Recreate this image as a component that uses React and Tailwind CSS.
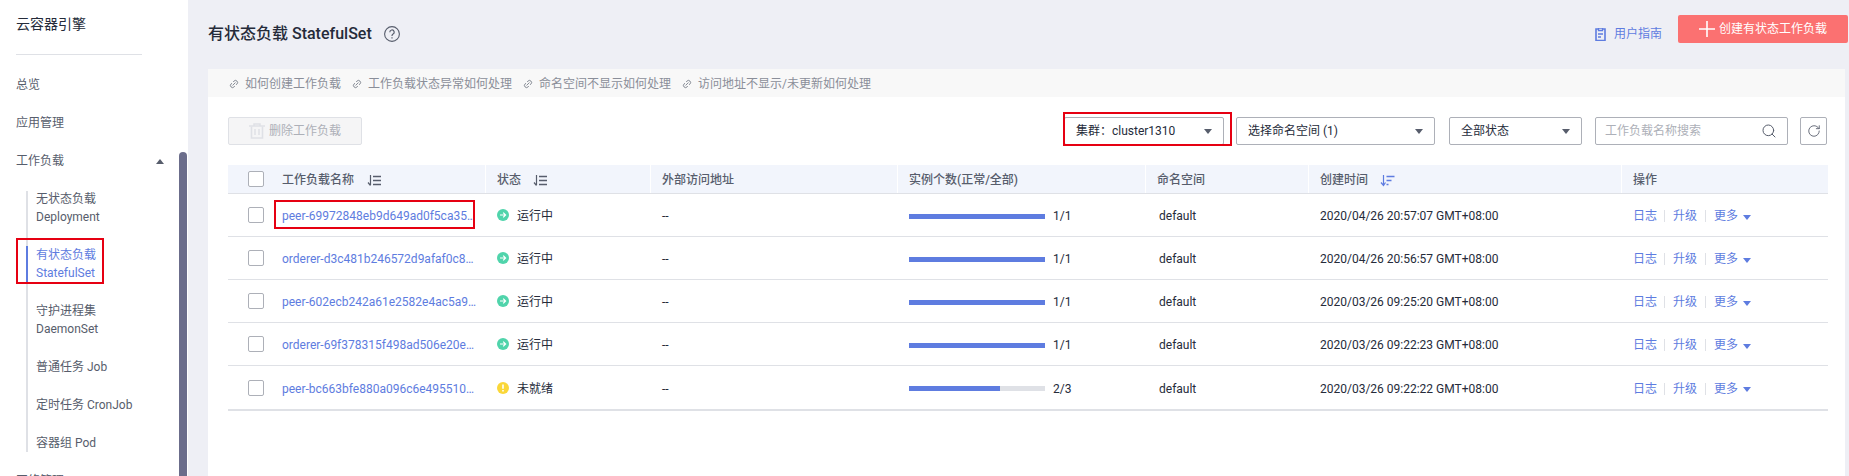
import React from 'react';
import { Search, RotateCw, Link2 } from 'lucide-react';

const rows = [
  { name: 'peer-69972848eb9d649ad0f5ca35b7c1e2a4', ok: true, pct: 100, count: '1/1', time: '2020/04/26 20:57:07 GMT+08:00', boxed: true },
  { name: 'orderer-d3c481b246572d9afaf0c8e17a2b94', ok: true, pct: 100, count: '1/1', time: '2020/04/26 20:56:57 GMT+08:00' },
  { name: 'peer-602ecb242a61e2582e4ac5a9d17f03c6', ok: true, pct: 100, count: '1/1', time: '2020/03/26 09:25:20 GMT+08:00' },
  { name: 'orderer-69f378315f498ad506e20e7c41b2a9', ok: true, pct: 100, count: '1/1', time: '2020/03/26 09:22:23 GMT+08:00' },
  { name: 'peer-bc663bfe880a096c6e495510d7e2f84a', ok: false, pct: 67, count: '2/3', time: '2020/03/26 09:22:22 GMT+08:00' },
];

const tips = ['如何创建工作负载', '工作负载状态异常如何处理', '命名空间不显示如何处理', '访问地址不显示/未更新如何处理'];

const cols = 'grid grid-cols-[258px_165px_247px_248px_163px_313px_206px]';

function SortIcon() {
  return (
    <svg width="15" height="13" viewBox="0 0 15 13" className="shrink-0" fill="none" stroke="#575d6c">
      <path d="M3.5 1v10M1 8.5l2.5 3" strokeWidth="1.2" />
      <path d="M6 2.5h8M6 6.5h8M6 10.5h8" strokeWidth="1.6" />
    </svg>
  );
}

function SortDescIcon() {
  return (
    <svg width="15" height="13" viewBox="0 0 15 13" className="shrink-0" fill="none" stroke="#5e7ce0">
      <path d="M3.5 1v10M1 8.5l2.5 3l2-3" strokeWidth="1.2" />
      <path d="M6.5 2.5h8M6.5 6.5h5M6.5 10.5h2" strokeWidth="1.6" />
    </svg>
  );
}

function Caret({ up, color = '#575d6c' }) {
  return (
    <svg width="8" height="5" viewBox="0 0 8 5" className="shrink-0">
      <path d={up ? 'M0 5L4 0L8 5Z' : 'M0 0L8 0L4 5Z'} fill={color} />
    </svg>
  );
}

function Checkbox({ className = '' }) {
  return <span className={`block h-4 w-4 shrink-0 rounded-[2px] border border-[#adb0b8] bg-white ${className}`} />;
}

function Select({ label, className, children }) {
  return (
    <div className={`relative flex h-7 items-center justify-between rounded-[2px] border border-[#adb0b8] bg-white pl-[11px] pr-[11px] text-xs text-[#252b3a] ${className}`}>
      <span>{label}</span>
      <Caret />
      {children}
    </div>
  );
}

function StatusIcon({ ok }) {
  return ok ? (
    <svg width="12" height="12" viewBox="0 0 12 12" className="-mt-[2px] shrink-0">
      <circle cx="6" cy="6" r="6" fill="#50d4ab" />
      <path d="M3 6h5.4M6.2 3.6L8.6 6L6.2 8.4" stroke="#fff" strokeWidth="1.2" fill="none" />
    </svg>
  ) : (
    <svg width="12" height="12" viewBox="0 0 12 12" className="-mt-[2px] shrink-0">
      <circle cx="6" cy="6" r="6" fill="#fad739" />
      <path d="M6 2.6v4.2M6 8v1.4" stroke="#fff" strokeWidth="1.6" fill="none" />
    </svg>
  );
}

function SubItem({ lines, active }) {
  return (
    <li className={`relative pl-2 leading-[18px] ${active ? 'text-[#5e7ce0]' : 'text-[#575d6c]'}`}>
      {active && <span className="absolute -left-[2px] top-0 bottom-0 w-[2px] bg-[#5e7ce0]" />}
      {active && <span className="absolute -left-[12px] -top-[8px] h-[46px] w-[88px] border-2 border-[#e60012]" />}
      {lines.map((l) => (
        <div key={l}>{l}</div>
      ))}
    </li>
  );
}

export default function App() {
  return (
    <div className="flex h-[476px] w-[1849px] overflow-hidden bg-[#eeeff5] font-['Roboto','Noto_Sans_CJK_SC',sans-serif] text-xs">
      <aside className="relative h-full w-[188px] shrink-0 overflow-hidden bg-white text-[#575d6c]">
        <div className="flex h-[54px] items-center pb-[6px] pl-4 text-sm text-[#252b3a]">云容器引擎</div>
        <div className="ml-4 h-px w-[126px] bg-[#dfe1e6]" />
        <nav className="mt-[11px]">
          <div className="flex h-[38px] items-center pl-4">总览</div>
          <div className="flex h-[38px] items-center pl-4">应用管理</div>
          <div className="flex h-[38px] items-center justify-between pl-4 pr-[24px]">
            <span>工作负载</span>
            <Caret up />
          </div>
          <ul className="relative ml-[26px] mt-2.5 mb-2.5 flex flex-col gap-5 pl-[2px]">
            <span className="absolute left-0 top-[1px] bottom-0 w-[2px] bg-[#dfe1e6]" />
            <SubItem lines={['无状态负载', 'Deployment']} />
            <SubItem lines={['有状态负载', 'StatefulSet']} active />
            <SubItem lines={['守护进程集', 'DaemonSet']} />
            <SubItem lines={['普通任务 Job']} />
            <SubItem lines={['定时任务 CronJob']} />
            <SubItem lines={['容器组 Pod']} />
          </ul>
          <div className="flex h-[38px] items-center pl-4">网络管理</div>
        </nav>
        <div className="absolute bottom-0 left-[179px] top-[152px] w-2 rounded-t-md bg-[#6b6d8b]" />
      </aside>

      <main className="min-w-0 flex-1 pl-5">
        <header className="flex h-[69px] items-start justify-between pr-px pt-[15px]">
          <div className="mt-[7px] flex items-center text-[#252b3a]">
            <h1 className="text-base font-medium leading-[24px]">有状态负载 StatefulSet</h1>
            <svg width="16" height="16" viewBox="0 0 16 16" className="ml-[12px]" fill="none">
              <circle cx="8" cy="8" r="7.4" stroke="#575d6c" strokeWidth="1.1" />
              <path d="M5.8 6.2a2.2 2.2 0 1 1 3.3 1.9c-.7.4-1.1.8-1.1 1.6v.3" stroke="#575d6c" strokeWidth="1.2" />
              <path d="M8 11.2v1.4" stroke="#575d6c" strokeWidth="1.2" />
            </svg>
          </div>
          <div className="flex items-start">
            <div className="mt-[9px] flex items-center gap-[8px] text-[#5e7ce0]">
              <svg width="11" height="13" viewBox="0 0 11 13">
                <path d="M3.5 1H1v11.5h9V1H7.500" fill="none" stroke="#5e7ce0" strokeWidth="1.6" />
                <path d="M3.500 0h4v2.500h-4zM3 6h5M3 9h3" fill="none" stroke="#5e7ce0" strokeWidth="1.300" />
              </svg>
              <span className="leading-[20px]">用户指南</span>
            </div>
            <button className="ml-[16px] flex h-7 w-[170px] items-center justify-center gap-[4px] rounded-[2px] bg-[#fb7171] text-white">
              <svg width="16" height="16" viewBox="0 0 16 16">
                <path d="M8 0v16M0 8h16" stroke="#fff" strokeWidth="1.600" />
              </svg>
              <span>创建有状态工作负载</span>
            </button>
          </div>
        </header>

        <div className="mr-1">
          <div className="flex h-7 items-center gap-[11px] bg-[#f8f8f8] pl-[21px] pt-px text-[#8a8e99]">
            {tips.map((t) => (
              <span key={t} className="flex items-center gap-[6px]">
                <Link2 size={10} strokeWidth={1.6} className="-rotate-45" color="#575d6c" />
                {t}
              </span>
            ))}
          </div>

          <section className="h-[379px] bg-white pl-5 pr-[18px] pt-5">
            <div className="flex h-7 items-center">
              <button className="flex h-7 w-[134px] items-center justify-center gap-[4px] rounded-[2px] border border-[#dfe1e6] bg-[#f5f5f6] text-[#adb0b8]">
                <svg width="16" height="16" viewBox="0 0 16 16" fill="none" stroke="#dfe1e6">
                  <path d="M0 3h16M5 3V1h6v2" strokeWidth="1.500" />
                  <path d="M2.500 3.500v11.500h11V3.500" strokeWidth="1.600" />
                  <path d="M6 6v6M10 6v6" strokeWidth="1.500" />
                </svg>
                <span>删除工作负载</span>
              </button>
              <Select label="集群：cluster1310" className="ml-auto w-[160px]">
                <span className="absolute -left-[2px] -top-[6px] h-[34px] w-[169px] border-2 border-[#e60012]" />
              </Select>
              <Select label="选择命名空间 (1)" className="ml-3 w-[199px]" />
              <Select label="全部状态" className="ml-[14px] w-[133px]" />
              <div className="ml-[13px] flex h-7 w-[193px] items-center justify-between rounded-[2px] border border-[#adb0b8] bg-white pl-[9px] pr-[10px] text-[#adb0b8]">
                <span>工作负载名称搜索</span>
                <Search size={16} strokeWidth={1.500} color="#575d6c" />
              </div>
              <div className="ml-3 flex h-7 w-[27px] items-center justify-center rounded-[2px] border border-[#adb0b8] bg-white">
                <RotateCw size={14} strokeWidth={1.500} color="#575d6c" />
              </div>
            </div>

            <div className="mt-5 w-[1600px]">
              <div className={`${cols} h-[29px] border-b border-[#dfe1e6] bg-[#f2f5fc] font-medium text-[#575d6c]`}>
                <div className="flex items-center gap-[18px] border-r border-white pl-5 pt-[2px]">
                  <Checkbox className="-mt-[2px]" />
                  <span>工作负载名称</span>
                  <span className="-ml-[5px]"><SortIcon /></span>
                </div>
                <div className="flex items-center gap-[12px] border-r border-white pl-[11px] pt-[2px]">
                  <span>状态</span>
                  <SortIcon />
                </div>
                <div className="flex items-center border-r border-white pl-[11px] pt-[2px]">外部访问地址</div>
                <div className="flex items-center border-r border-white pl-[11px] pt-[2px]">实例个数(正常/全部)</div>
                <div className="flex items-center border-r border-white pl-[11px] pt-[2px]">命名空间</div>
                <div className="flex items-center gap-[12px] border-r border-white pl-[11px] pt-[2px]">
                  <span>创建时间</span>
                  <SortDescIcon />
                </div>
                <div className="flex items-center pl-[11px] pt-[2px]">操作</div>
              </div>

              <div className="border-b-2 border-[#dfe1e6]">
                {rows.map((r, i) => (
                  <div key={r.name} className={`${cols} h-[43px] text-[#252b3a] ${i < rows.length - 1 ? 'border-b border-[#dfe1e6]' : ''}`}>
                    <div className="flex items-center gap-[18px] pl-5">
                      <Checkbox />
                      <span className="relative block w-[196px] pt-[2px]">
                        <span className="block truncate leading-[18px] text-[#5e7ce0]">{r.name}</span>
                        {r.boxed && <span className="absolute -left-[8px] -top-[5px] h-[29px] w-[201px] border-2 border-[#e60012]" />}
                      </span>
                    </div>
                    <div className="flex items-center gap-[8px] pl-[11px] pt-[2px]">
                      <StatusIcon ok={r.ok} />
                      <span>{r.ok ? '运行中' : '未就绪'}</span>
                    </div>
                    <div className="flex items-center pl-[11px] pt-[2px]">--</div>
                    <div className="flex items-center gap-2 pl-[11px]">
                      <div className="mt-[2px] h-[5px] w-[136px] bg-[#dfe1e6]">
                        <div className="h-full bg-[#5e7ce0]" style={{ width: `${r.pct}%` }} />
                      </div>
                      <span className="pt-[2px]">{r.count}</span>
                    </div>
                    <div className="flex items-center pl-[13px] pt-[2px]">default</div>
                    <div className="flex items-center pl-[11px] pt-[2px]">{r.time}</div>
                    <div className="flex items-center pl-[11px] pt-[2px] text-[#5e7ce0]">
                      <span>日志</span>
                      <span className="ml-[7px] mr-[8px] h-3 w-px bg-[#dfe1e6]" />
                      <span>升级</span>
                      <span className="mx-[8px] h-3 w-px bg-[#dfe1e6]" />
                      <span>更多</span>
                      <span className="ml-[5px] mt-[2px]"><Caret color="#5e7ce0" /></span>
                    </div>
                  </div>
                ))}
              </div>
            </div>
          </section>
        </div>
      </main>
    </div>
  );
}
